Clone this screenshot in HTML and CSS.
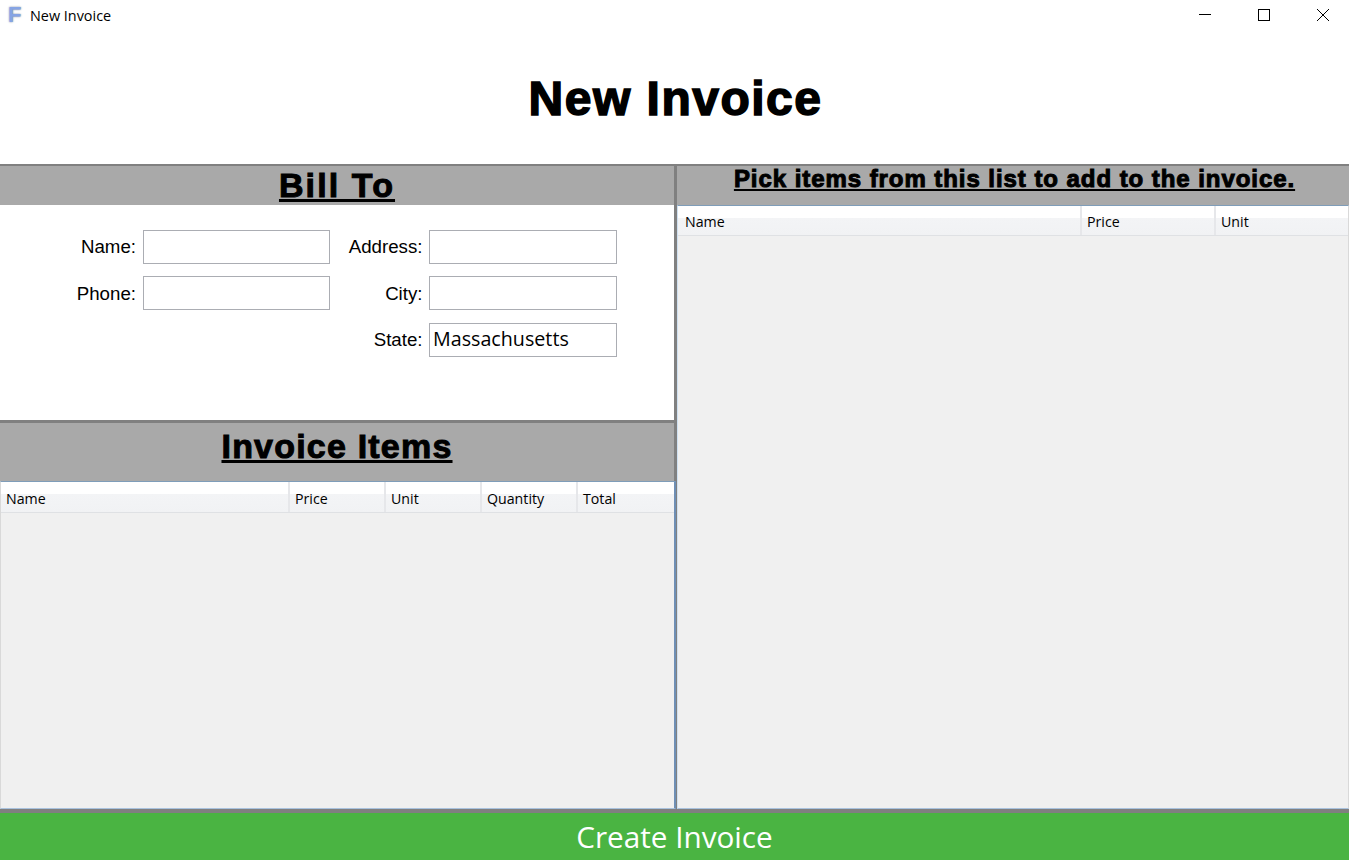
FILE: index.html
```html
<!DOCTYPE html>
<html lang="en">
<head>
    <meta charset="UTF-8">
    <title>New Invoice</title>
    <link rel="stylesheet" href="styles.css">
</head>
<body>
<div class="titlebar">
    <span class="app-icon">F</span>
    <span class="window-title">New Invoice</span>
    <div class="window-buttons">
        <svg width="12" height="12" viewBox="0 0 12 12"><path d="M0 5.5H12" stroke="#000" fill="none"/></svg>
        <svg width="12" height="12" viewBox="0 0 12 12"><rect x="0.5" y="0.5" width="11" height="11" stroke="#000" fill="none"/></svg>
        <svg width="12" height="12" viewBox="0 0 12 12"><path d="M0 0L12 12M12 0L0 12" stroke="#000" fill="none"/></svg>
    </div>
</div>
<h1 class="page-title">New Invoice</h1>
<div class="content">
    <div class="left">
        <h2 class="band band-bill">Bill To</h2>
        <form class="bill-form">
            <label>Name:</label>
            <input type="text">
            <label>Address:</label>
            <input type="text">
            <label>Phone:</label>
            <input type="text">
            <label>City:</label>
            <input type="text">
            <label class="state-label">State:</label>
            <input type="text" value="Massachusetts">
        </form>
        <h2 class="band band-items">Invoice Items</h2>
        <div class="list list-items">
            <div class="list-head head-items">
                <div class="col col-name">Name</div>
                <div class="col col-small">Price</div>
                <div class="col col-small">Unit</div>
                <div class="col col-small">Quantity</div>
                <div class="col col-small">Total</div>
            </div>
        </div>
    </div>
    <div class="right">
        <h2 class="band band-pick">Pick items from this list to add to the invoice.</h2>
        <div class="list list-pick">
            <div class="list-head">
                <div class="col col-pick-name">Name</div>
                <div class="col col-pick">Price</div>
                <div class="col col-pick">Unit</div>
            </div>
        </div>
    </div>
</div>
<button class="create-btn">Create Invoice</button>
</body>
</html>
```

FILE: styles.css
```css
html, body {
    height: 100%;
}

body {
    margin: 0;
    display: flex;
    flex-direction: column;
    height: 860px;
    overflow: hidden;
    background-color: #fff;
    color: #000;
    font-family: "Liberation Sans", Arial, sans-serif;
}

.titlebar {
    display: flex;
    align-items: center;
    height: 30px;
    flex: none;
}

.app-icon {
    width: 14px;
    margin-left: 8px;
    color: #86a4e4;
    font-size: 22px;
    font-weight: bold;
    line-height: 30px;
    text-shadow: 0 0 2px #75809a;
}

.window-title {
    margin-left: 8px;
    font-family: "Open Sans", sans-serif;
    font-size: 14.4px;
}

.window-buttons {
    display: flex;
    gap: 47px;
    margin-left: auto;
    margin-right: 20px;
}

.page-title {
    flex: none;
    height: 134px;
    margin: 0;
    padding-left: 2px;
    font-size: 48px;
    line-height: 138px;
    text-align: center;
    letter-spacing: 1.5px;
    -webkit-text-stroke: 1.5px #000;
}

.content {
    flex: 1;
    display: flex;
    min-height: 0;
    border-top: 2px solid #808080;
    border-bottom: 4px solid #808080;
}

.left {
    width: 674px;
    display: flex;
    flex-direction: column;
    flex: none;
}

.right {
    flex: 1;
    display: flex;
    flex-direction: column;
    min-width: 0;
    border-left: 3px solid #808080;
}

.band {
    flex: none;
    margin: 0;
    background-color: #a9a9a9;
    text-align: center;
    text-decoration: underline;
    -webkit-text-stroke: 1px #000;
}

.band-bill {
    height: 39px;
    font-size: 34px;
    line-height: 39px;
    letter-spacing: 2.1px;
}

.band-items {
    height: 58px;
    border-top: 3px solid #808080;
    font-size: 34px;
    line-height: 47px;
    letter-spacing: 1.2px;
}

.band-pick {
    height: 39px;
    padding-left: 3px;
    font-size: 24px;
    line-height: 26px;
    letter-spacing: 0.94px;
}

.bill-form {
    flex: none;
    height: 215px;
    box-sizing: border-box;
    padding: 24.9px 0 0 0;
    display: grid;
    grid-template-columns: 136px 187px 86.5px 188px;
    grid-auto-rows: 34px;
    column-gap: 6.5px;
    row-gap: 12.5px;
    align-items: center;
    font-size: 18.7px;
}

.bill-form label {
    padding-top: 0.4px;
    text-align: right;
}

.state-label {
    grid-column: 3;
}

.bill-form input {
    box-sizing: border-box;
    width: 100%;
    height: 34px;
    margin: 0;
    padding: 0 3px 2px;
    border: 1px solid #abadb3;
    border-radius: 0;
    outline: none;
    color: #000;
    font-family: "Open Sans", sans-serif;
    font-size: 19.7px;
}

.list {
    flex: 1;
    min-height: 0;
    box-sizing: border-box;
    background-color: #f0f0f0;
    border: 1px solid #a9c2de;
    border-top-color: #7f9db9;
}

.list-items {
    position: relative;
    margin-right: -2px;
    border-left-color: #d9d9d9;
    border-right: 2px solid #6f8fb5;
}

.list-pick {
    border-left-color: #cfe0f0;
    border-right-color: #d9d9d9;
}

.list-head {
    display: flex;
    height: 30px;
    background: linear-gradient(#fff 0, #fff 40%, #f3f4f6 41%, #f1f2f4 100%);
    border-bottom: 1px solid #dfe1e4;
    box-sizing: border-box;
    font-family: "Open Sans", sans-serif;
    font-size: 14.2px;
    line-height: 31px;
}

.head-items {
    height: 31px;
    line-height: 33px;
}

.col {
    box-sizing: border-box;
    padding-left: 5px;
    border-right: 2px solid #e6e7ea;
}

.col-name {
    width: 289px;
}

.col-small {
    width: 96px;
}

.col-small:last-child {
    flex: 1;
    border-right: none;
}

.col-pick-name {
    width: 404px;
    padding-left: 7px;
}

.col-pick {
    width: 134px;
}

.col-pick:last-child {
    flex: 1;
    border-right: none;
}

.create-btn {
    flex: none;
    height: 47px;
    border: none;
    padding: 0;
    background-color: #4ab442;
    color: #fff;
    font-family: "Open Sans", sans-serif;
    font-size: 29.7px;
}
```
